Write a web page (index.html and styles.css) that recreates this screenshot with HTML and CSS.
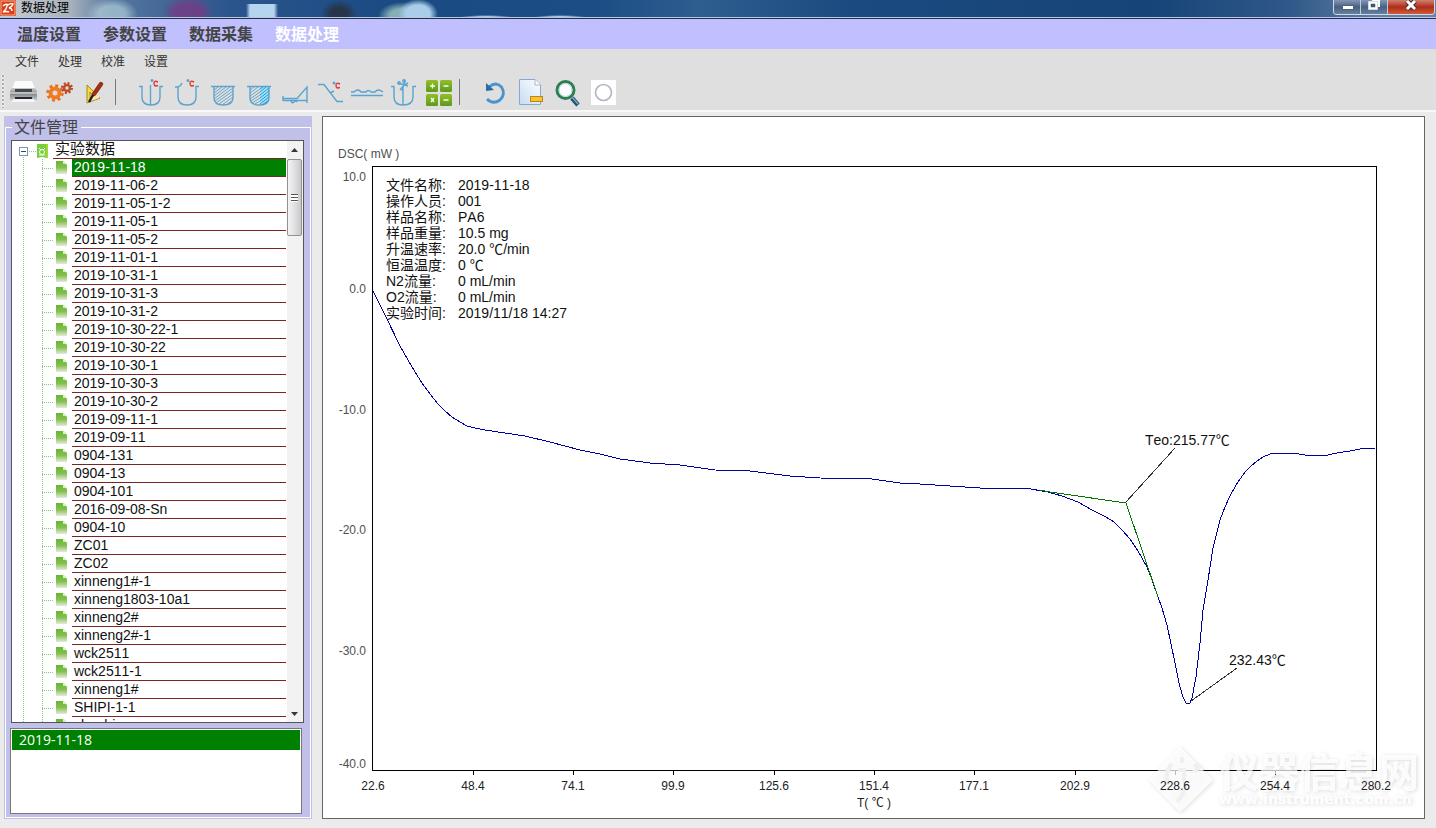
FILE: index.html
```html
<!DOCTYPE html>
<html lang="zh-CN">
<head>
<meta charset="utf-8">
<title>数据处理</title>
<link rel="stylesheet" href="styles.css">
</head>
<body>
<header class="titlebar">
  <svg class="app-icon" viewBox="0 0 16 16" aria-hidden="true"><rect width="16" height="16" fill="#d8401c"/><rect x="1" y="1" width="14" height="14" fill="none" stroke="#f6b090"/><path d="M3 6Q6 3 8 5Q11 3 13 4Q12 7 9 8Q12 8 12 11M7 5Q7 9 3 12Q7 11 9 12" fill="none" stroke="#fff" stroke-width="1.4"/></svg>
  <h1 class="title">数据处理</h1>
  <div class="window-buttons">
    <button class="win" aria-label="最小化"><svg viewBox="0 0 26 14"><rect x="8.500" y="5.500" width="11" height="4" fill="#fff" stroke="#50607a"/></svg></button>
    <button class="win" aria-label="还原"><svg viewBox="0 0 26 14"><path d="M11 0H18V7" fill="none" stroke="#fff" stroke-width="2"/><rect x="8.500" y="2.500" width="7" height="6" fill="#42536e" stroke="#fff" stroke-width="2.500"/></svg></button>
    <button class="win win-close" aria-label="关闭"><svg viewBox="0 0 46 14"><path d="M19 1L27 9M27 1L19 9" stroke="#4a2a30" stroke-width="5"/><path d="M19 1L27 9M27 1L19 9" stroke="#fff" stroke-width="3"/></svg></button>
  </div>
</header>
<nav class="tabs">
  <button class="tab">温度设置</button><button class="tab">参数设置</button><button class="tab">数据采集</button><button class="tab tab-active">数据处理</button>
</nav>
<nav class="menu">
  <button class="menu-item">文件</button><button class="menu-item">处理</button><button class="menu-item">校准</button><button class="menu-item">设置</button>
</nav>
<div class="toolbar" role="toolbar">
  <button class="tool" aria-label="打印"><svg viewBox="0 0 36 36">
    <defs><linearGradient id="pr" x1="0" y1="0" x2="0" y2="1"><stop offset="0" stop-color="#c9cccf"/><stop offset=".5" stop-color="#85898d"/><stop offset="1" stop-color="#c4c6c8"/></linearGradient></defs>
    <path d="M10 7H27L30 15H7Z" fill="#fcfcfc"/><path d="M7 14L5 17V26H32V17L30 14Z" fill="url(#pr)"/><path d="M10 15H27V18H10Z" fill="#45484c"/><path d="M5 19H32" stroke="#e8e8e8"/><path d="M10 23H27V25H10Z" fill="#25272a"/><path d="M8 25H29L30 28H7Z" fill="#f4f5f6"/></svg></button>
  <button class="tool" aria-label="参数"><svg viewBox="0 0 36 36">
    <circle cx="14" cy="19" r="7" fill="none" stroke="#e8701c" stroke-width="3.500" stroke-dasharray="2.750 2.750"/><circle cx="14" cy="19" r="4.500" fill="none" stroke="#ee7c24" stroke-width="4"/>
    <circle cx="26" cy="14" r="4.700" fill="none" stroke="#b94420" stroke-width="2.500" stroke-dasharray="1.850 1.840"/><circle cx="26" cy="14" r="3" fill="none" stroke="#c04c28" stroke-width="2.600"/></svg></button>
  <button class="tool" aria-label="绘图"><svg viewBox="0 0 36 36">
    <path d="M10 11L23 24L10 29Z" fill="#f6dc3c" stroke="#a08818"/><path d="M13 18L16 22L13 24Z" fill="#e4e4e4" stroke="#a08818"/><path d="M10 28L19 17L23 24Z" fill="#f8e5bb"/><path d="M24 10L17 20" stroke="#9e3018" stroke-width="4.500" stroke-linecap="round"/><path d="M16 21L12 28" stroke="#202020" stroke-width="2.500"/><path d="M20 26L23 23" stroke="#c89820"/></svg></button>
  <span class="separator"></span>
  <button class="tool" aria-label="峰温"><svg viewBox="0 0 36 36" class="line"><path d="M6 12.500H9V23Q9 31 18 31Q27 31 27 23V12.500H30M17.500 11V31"/><circle cx="19" cy="6.500" r=".8"/><path class="deg" d="M25 8Q21 6 21 9.500Q21 13 25 11.500"/></svg></button>
  <button class="tool" aria-label="起始温度"><svg viewBox="0 0 36 36" class="line"><path d="M6 13H9Q12 12 13 9M9 13V23Q9 31 18 31Q27 31 27 23V12.500H30"/><circle cx="19" cy="6.500" r=".8"/><path class="deg" d="M25 8Q21 6 21 9.500Q21 13 25 11.500"/></svg></button>
  <button class="tool" aria-label="峰面积"><svg viewBox="0 0 36 36" class="line">
    <path d="M6 12.500H30M9 12.500H28V24Q28 31 18 31Q9 31 9 24Z"/><path class="hatch" d="M9 16L13 13M9 19L17 13M9 22L21 13M9 25L25 13M10 27L28 14M11 29L28 17M14 30L28 20M17 31L28 23M21 31L28 26"/></svg></button>
  <button class="tool" aria-label="部分面积"><svg viewBox="0 0 36 36" class="line">
    <path d="M19 13H28V24Q28 31 19 31Z" fill="#a9e0f8" stroke="none"/><path d="M6 12.500H30M9 12.500H28V24Q28 31 18 31Q9 31 9 24Z"/><path class="hatch" d="M9 16L13 13M9 19L17 13M9 22L19 15M9 25L19 18M10 27L19 21M11 29L19 24M14 30L19 27"/><path class="hatch hatch-strong" d="M19 15L22 13M19 18L25 13M19 21L28 14M19 24L28 17M19 27L28 20M19 30L28 23M21 31L28 26"/></svg></button>
  <button class="tool" aria-label="基线"><svg viewBox="0 0 36 36" class="line"><path d="M6 24.500H20L30 13V29M6 22V27M6 26.500H30M14 27Q15 30 17 28Q18 26 20 28"/></svg></button>
  <button class="tool" aria-label="玻璃化"><svg viewBox="0 0 36 36" class="line"><path d="M5 10.500H11L24 27.500H30M17 19L21 17"/><circle cx="21" cy="9" r=".8"/><path class="deg" d="M27 10Q23 8 23 11.500Q23 15 27 13.500"/></svg></button>
  <button class="tool" aria-label="平滑"><svg viewBox="0 0 36 36" class="line"><path d="M2 18H5Q9 14 12 18H17Q19 15 22 18H26Q29 14 34 18M2 21.500H34"/></svg></button>
  <button class="tool" aria-label="截取"><svg viewBox="0 0 36 36" class="line"><path d="M6 12.500H9V23Q9 31 18 31Q28 31 28 23V12.500H31M13 9L23 12M20 6L17 17M18 12V31M15 16L19 11L23 9"/><circle cx="14" cy="9" r="1.200"/><circle cx="19" cy="7" r="1.200"/></svg></button>
  <button class="tool" aria-label="计算"><svg viewBox="0 0 36 36">
    <defs><linearGradient id="gr" x1="0" y1="0" x2="0" y2="1"><stop offset="0" stop-color="#93bf28"/><stop offset="1" stop-color="#5d991c"/></linearGradient></defs>
    <g fill="url(#gr)"><rect x="5" y="6" width="12" height="12" rx="1.500"/><rect x="19" y="6" width="12" height="12" rx="1.500"/><rect x="5" y="20" width="12" height="12" rx="1.500"/><rect x="19" y="20" width="12" height="12" rx="1.500"/></g>
    <path d="M9 12H14M11.500 9.500V14.500M22.500 12H27.500M10 24L13 28M13 24L10 28M22.500 26H27.500" stroke="#f5ffe0" stroke-width="1.300"/></svg></button>
  <span class="separator"></span>
  <button class="tool" aria-label="撤销"><svg viewBox="0 0 36 36"><path d="M12 13Q19 7 24.500 13Q29 20 23 26Q16 31 10 25" fill="none" stroke="#4b94cb" stroke-width="2.800"/><path d="M9 9V17L17 16Z" fill="#2a6ba8"/></svg></button>
  <button class="tool" aria-label="删除文件"><svg viewBox="0 0 36 36"><defs><linearGradient id="pg" x1="1" y1="0" x2="0" y2="1"><stop offset="0" stop-color="#fff"/><stop offset="1" stop-color="#c4dcf0"/></linearGradient></defs><path d="M6.500 5.500H22L27.500 11V30.500H6.500Z" fill="url(#pg)" stroke="#88a8cc"/><path d="M22 5.500V11H27.500" fill="#fff" stroke="#a0b8d4"/><rect x="17.500" y="22.500" width="12" height="5" fill="#f8c42c" stroke="#ba861c"/></svg></button>
  <button class="tool" aria-label="查看"><svg viewBox="0 0 36 36"><path d="M23 24L29 31" stroke="#234f70" stroke-width="4.500"/><path d="M23 23L29 30" stroke="#72a9cc" stroke-width="1.500"/><circle cx="16.500" cy="16" r="8.500" fill="#fafcff" stroke="#2a8050" stroke-width="3"/><circle cx="16.500" cy="16" r="6.500" fill="none" stroke="#c0ccd8"/></svg></button>
  <button class="tool" aria-label="圆"><svg viewBox="0 0 36 36"><rect x="6" y="6" width="25" height="25" fill="#fff"/><circle cx="18.500" cy="18.500" r="8" fill="none" stroke="#b4b6c4" stroke-width="1.700"/></svg></button>
</div>
<main class="workspace">
  <aside class="side">
    <fieldset class="group">
      <legend class="legend">文件管理</legend>
      <div class="tree-box">
        <div class="tree">
          <div class="root">
            <svg class="root-mark" viewBox="0 0 38 18" aria-hidden="true"><rect x="7.500" y="6.500" width="8" height="8" fill="#fff" stroke="#8494a8"/><path d="M9 10.500H14" stroke="#244a90"/><path d="M17 10.500H24M11.500 16V18" stroke="#80cc80" stroke-dasharray="1 1"/><path d="M25 3H36V17L30 16L25 17Z" fill="#78cc40"/><path d="M34 3H36V17H34Z" fill="#a0d830"/><circle cx="30" cy="11" r="2.500" fill="none" stroke="#fff"/><path d="M27 7L29 9M33 7L31 9M27 14H33" stroke="#fff"/></svg>
            <button class="root-name">实验数据</button>
          </div>
          <ul class="files" id="files"></ul>
        </div>
        <div class="scroll">
          <button class="arrow" aria-label="向上滚动"><svg viewBox="0 0 15 17"><path d="M4 11L7.500 7L11 11Z" fill="#303840"/></svg></button>
          <div class="thumb"></div>
          <button class="arrow arrow-down" aria-label="向下滚动"><svg viewBox="0 0 15 17"><path d="M4 7L7.500 11L11 7Z" fill="#303840"/></svg></button>
        </div>
      </div>
      <div class="open-box"><button class="open-name">2019-11-18</button></div>
    </fieldset>
  </aside>
  <section class="chart">
    <svg class="plot" viewBox="323 117 1101 701" role="img" aria-label="DSC">
      <defs><filter id="soft" x="-10%" y="-20%" width="120%" height="140%"><feDropShadow dx="1" dy="1" stdDeviation="2" flood-color="#000" flood-opacity=".2"/></filter></defs>
      <rect class="frame" x="372.500" y="166.500" width="1004" height="604"/>
      <path class="frame" d="M473.500 770V775M573.500 770V775M673.500 770V775M774.500 770V775M874.500 770V775M974.500 770V775M1075.500 770V775M1175.500 770V775M1275.500 770V775"/>
      <polyline class="curve" points="373,291 386,317 400,346 408,360 415,372 422,383 430,394 438,404 445,411 452,417 460,422 467,426 475,428 485,430 505,433 525,436 550,442 580,450 600,454 620,459 650,463 680,465 715,470 750,471 790,476 820,478 872,479 900,483 920,484 950,486 980,488 1025,488 1048,492 1062,496 1078,502 1092,510 1106,517 1114,522 1122,530 1130,539 1138,551 1147,567 1152,580 1157,594 1162,608 1167,625 1171,644 1175,663 1179,683 1183,697 1186,703 1188,704 1190,703 1192,698 1196,677 1200,643 1203,610 1208,580 1213,548 1220,520 1225,507 1230,496 1236,485 1245,472 1251,466 1257,461 1263,457 1270,454 1277,453 1293,453 1305,455 1323,456 1337,453 1350,451 1360,449 1366,448 1375,448"/>
      <polyline class="tangent" points="1040,490 1050,492 1126,503 1158,597"/>
      <path class="leader" d="M1175 448L1126 502M1237 668L1191 701"/>
      <g class="watermark" filter="url(#soft)">
        <path d="M1149 780L1180 747L1213 780L1180 812Z"/>
        <path class="mark-line" d="M1168 785Q1164 772 1172 764M1182 757V763M1178 770H1184V780Q1188 790 1177 802M1194 764L1198 768L1194 772"/>
        <text class="mark-name" x="1219" y="787">仪器信息网</text>
        <text class="mark-url" x="1219" y="804">www.instrument.com.cn</text>
      </g>
      <g class="axis">
        <text class="soft-text" x="338" y="158">DSC( mW )</text>
        <g class="y-axis"><text x="366" y="181">10.0</text><text x="366" y="293">0.0</text><text x="366" y="414">-10.0</text><text x="366" y="534">-20.0</text><text x="366" y="655">-30.0</text><text x="366" y="768">-40.0</text></g>
        <g class="x-axis"><text x="373" y="790">22.6</text><text x="473" y="790">48.4</text><text x="573" y="790">74.1</text><text x="673" y="790">99.9</text><text x="774" y="790">125.6</text><text x="874" y="790">151.4</text><text x="974" y="790">177.1</text><text x="1075" y="790">202.9</text><text x="1175" y="790">228.6</text><text x="1275" y="790">254.4</text><text x="1376" y="790">280.2</text><text x="874" y="807">T( ℃ )</text></g>
      </g>
      <g class="note"><text x="1145" y="445">Teo:215.77℃</text><text x="1229" y="665">232.43℃</text></g>
    </svg>
    <dl class="info">
      <dt>文件名称:</dt><dd>2019-11-18</dd>
      <dt>操作人员:</dt><dd>001</dd>
      <dt>样品名称:</dt><dd>PA6</dd>
      <dt>样品重量:</dt><dd>10.5 mg</dd>
      <dt>升温速率:</dt><dd>20.0 ℃/min</dd>
      <dt>恒温温度:</dt><dd>0 ℃</dd>
      <dt>N2流量:</dt><dd>0 mL/min</dd>
      <dt>O2流量:</dt><dd>0 mL/min</dd>
      <dt>实验时间:</dt><dd>2019/11/18 14:27</dd>
    </dl>
  </section>
</main>
<script src="files.js"></script>
</body>
</html>
```
FILE: styles.css
```css
* { box-sizing: border-box; }
body { margin: 0; height: 100vh; display: flex; flex-direction: column; overflow: hidden; background: #ebebeb; font-family: "Liberation Sans", "Noto Sans CJK SC", sans-serif; font-kerning: none; color: #111; }
button { margin: 0; padding: 0; border: 0; background: none; font: inherit; font-kerning: none; color: inherit; }
svg { display: block; }

.titlebar { flex: none; height: 19px; display: flex; align-items: flex-start; border-bottom: 1px solid #1c2f55; box-shadow: inset 0 -1px #b9c8dc;
  background:
    radial-gradient(ellipse 26px 16px at 112px 14px, #b5d2dcaa 50%, transparent),
    radial-gradient(ellipse 26px 16px at 188px 12px, #773a84cc 50%, transparent),
    linear-gradient(90deg, transparent 246px, #b4d4f0 250px 274px, transparent 278px) 0 4px no-repeat,
    radial-gradient(ellipse 18px 14px at 339px 14px, #26354a 45%, transparent),
    radial-gradient(ellipse 20px 15px at 418px 14px, #aacdea 60%, transparent),
    radial-gradient(ellipse 24px 14px at 402px 16px, #86aeb6 50%, transparent),
    radial-gradient(ellipse 28px 3px at 486px 18px, #a8c4e0 50%, transparent),
    radial-gradient(ellipse 28px 3px at 560px 18px, #a8c4e0 50%, transparent),
    linear-gradient(90deg, #c8ccd0 0, #a8b2bc 70px, #5878a0 110px, #2a558c 230px, #1a4a82 400px, #1c4e85 600px, #2e5d8f 700px, #1b4a80 850px, #164478 1150px, #305888 1290px, #5f7fa5 1380px, #6984a8 100%); }
.app-icon { width: 16px; height: 16px; }
.title { margin: 0 auto 0 5px; font-size: 12px; line-height: 16px; font-weight: 400; color: #000; }
.window-buttons { display: flex; height: 15px; margin-right: 1px; border: 1px solid #d0dbe8; border-top: 0; border-radius: 0 0 4px 4px; overflow: hidden; }
.win { width: 27px; height: 14px; border-right: 1px solid #c0ccda; background: linear-gradient(#8297b5, #48617f 50%, #6681a0); }
.win svg { width: 26px; height: 14px; }
.win-close { width: 46px; border-right: 0; background: linear-gradient(#d08070, #b02c18 50%, #d05a38); }
.win-close svg { width: 46px; }

.tabs { flex: none; height: 30px; padding: 2px 0 0 17px; display: flex; align-items: center; gap: 22px; background: #c0c0ff; }
.tab { font-size: 16px; line-height: 24px; font-weight: 700; color: #444; }
.tab-active { color: #fff; }
.menu { flex: none; height: 24px; padding: 2px 0 0 15px; display: flex; align-items: center; gap: 19px; background: #dfdfdf; }
.menu-item { font-size: 12px; line-height: 18px; color: #333; }
.toolbar { flex: none; height: 39px; padding: 1px 0 0 1px; display: flex; background: #dfdfdf; border-bottom: 2px solid #f8f8f8; }
.toolbar::before { content: ""; flex: none; width: 4px; height: 34px; background: radial-gradient(circle at 2px 2px, #aaa 1px, #fff 1px, transparent 2px) 0 0 / 4px 4px; }
.tool { flex: none; width: 36px; height: 36px; }
.tool svg { width: 36px; height: 36px; }
.line { fill: none; stroke: #5ba4cf; stroke-width: 1.4; }
.hatch { stroke: #68a5c6; stroke-width: 1; }
.hatch-strong { stroke: #209cd8; }
.deg { stroke: #e03838; }
.separator { flex: none; width: 1px; height: 26px; margin: 5px 17px 0 2px; background: #777; }

.workspace { flex: 1; min-height: 0; display: flex; gap: 10px; padding: 4px 11px 9px 4px; }
.side { flex: none; width: 308px; display: flex; padding: 1px; background: #c1c0e8; }
.group { flex: 1; min-width: 0; margin: 0; padding: 3px 6px 3px 5px; border: 1px solid #fff; display: flex; flex-direction: column; gap: 5px; }
.legend { margin-left: 1px; padding: 1px 3px 0 2px; font-size: 16px; line-height: 19px; color: #444; }
.tree-box { flex: 1; min-height: 0; display: flex; border: 1px solid #555; background: #fff; }
.tree { flex: 1; min-width: 0; overflow: hidden; }
.root { display: flex; height: 18px; }
.root-mark { flex: none; width: 41px; height: 18px; padding-right: 3px; }
.root-name { flex: 1; padding: 0 0 2px 2px; text-align: left; font-size: 15px; line-height: 15px; border-bottom: 1px solid #7a2424; margin-right: 1px; }
.files { list-style: none; margin: 0; padding: 0 1px 0 11px; }
.file { display: flex; height: 18px; }
.trunk, .twig { background: repeating-linear-gradient(#80cc80 0 1px, #fff 1px 2px) 0 0 / 1px 100% no-repeat; }
.trunk { flex: none; width: 19px; }
.twig { flex: none; width: 12px; margin-right: 2px; display: flex; align-items: center; }
.twig::after { content: ""; flex: 1; height: 1px; background: repeating-linear-gradient(90deg, #80cc80 0 1px, #fff 1px 2px); }
.leaf { flex: none; width: 11px; height: 14px; margin: 1px 5px 0 0; }
.name { flex: 1; text-align: left; padding-left: 2px; font-size: 14px; line-height: 17px; border-bottom: 1px solid #7a2424; }
.picked { background: #008000; color: #fff; }
.scroll { flex: none; width: 16px; display: flex; flex-direction: column; background: #f2f2f2; }
.arrow { height: 17px; }
.arrow svg { width: 15px; height: 17px; }
.arrow-down { margin-top: auto; }
.thumb { height: 77px; border: 1px solid #909090; border-radius: 2px; margin: 1px 1px 0 0; background: repeating-linear-gradient(#555 0 1px, #fff 1px 3px) center / 7px 8px no-repeat, linear-gradient(90deg, #f4f4f4, #e0e0e2 50%, #c8c8cc); }
.open-box { flex: none; height: 86px; margin: 0 2px 0 -1px; padding: 1px; border: 1px solid #777; background: #fff; }
.open-name { display: block; width: 100%; height: 20px; padding-left: 7px; text-align: left; background: #008000; color: #fff; font-family: "Open Sans", "Noto Sans", sans-serif; font-size: 14px; line-height: 20px; }

.chart { flex: 1; min-width: 0; position: relative; border: 1px solid #666; background: #fff; }
.plot { width: 100%; height: 100%; }
.frame { fill: none; stroke: #000; }
.curve { fill: none; stroke: #0000a0; stroke-width: 1; shape-rendering: crispEdges; }
.tangent { fill: none; stroke: #007800; shape-rendering: crispEdges; }
.leader { stroke: #333; stroke-width: 1; shape-rendering: crispEdges; }
.axis { font-size: 12px; fill: #222; }
.soft-text, .y-axis { fill: #505050; }
.y-axis { text-anchor: end; }
.x-axis { text-anchor: middle; }
.note { font-size: 14px; fill: #111; }
.watermark { fill: #fff; fill-opacity: .7; }
.mark-line { fill: none; stroke: #f0f0f0; stroke-width: 4; }
.mark-name { font-size: 40px; font-weight: 700; }
.mark-url { font-family: "DejaVu Sans", sans-serif; font-size: 14px; font-weight: 700; }
.info { position: absolute; left: 63px; top: 60px; margin: 0; display: grid; grid-template-columns: 72px auto; font-size: 14px; line-height: 16px; white-space: nowrap; }
.info dd { margin: 0; }
```
FILE: files.js
```js
const names = ["2019-11-18", "2019-11-06-2", "2019-11-05-1-2", "2019-11-05-1", "2019-11-05-2", "2019-11-01-1", "2019-10-31-1", "2019-10-31-3", "2019-10-31-2", "2019-10-30-22-1", "2019-10-30-22", "2019-10-30-1", "2019-10-30-3", "2019-10-30-2", "2019-09-11-1", "2019-09-11", "0904-131", "0904-13", "0904-101", "2016-09-08-Sn", "0904-10", "ZC01", "ZC02", "xinneng1#-1", "xinneng1803-10a1", "xinneng2#", "xinneng2#-1", "wck2511", "wck2511-1", "xinneng1#", "SHIPI-1-1", "shaohi"];
const leaf = '<svg class="leaf" viewBox="0 0 11 14"><defs><linearGradient id="lf" x1="0" y1="0" x2="0" y2="1"><stop offset="0" stop-color="#64b830"/><stop offset=".5" stop-color="#84c050"/><stop offset="1" stop-color="#e4ead8"/></linearGradient></defs><path d="M0 1H7L11 5V14H0Z" fill="url(#lf)"/><path d="M7 0V4H11" fill="#d8f0c0"/></svg>';
document.getElementById("files").innerHTML = names.map((n, i) =>
  `<li class="file"><span class="trunk"></span><span class="twig"></span>${leaf}<button class="name${i ? "" : " picked"}">${n}</button></li>`).join("");
```
